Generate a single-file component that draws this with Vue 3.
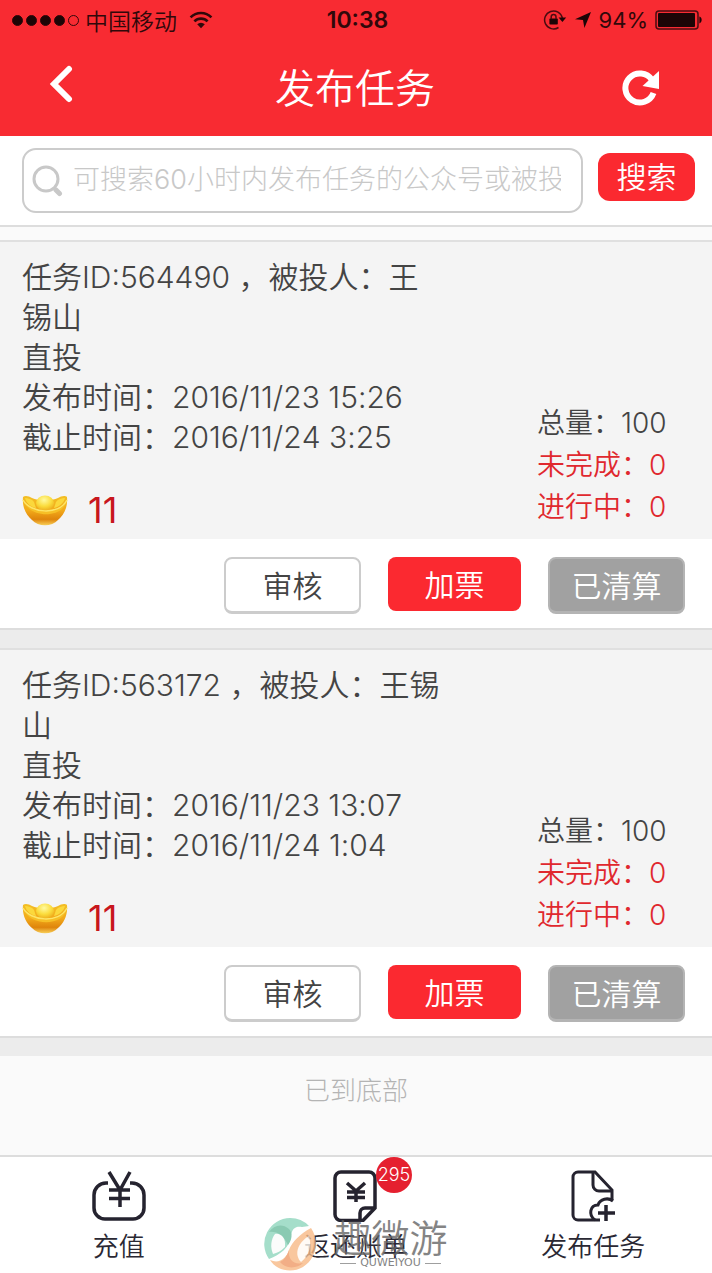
<template>
    <div class="app">
        <header class="top">
            <div class="status-bar">
                <div class="status-left">
                    <span class="signal">
                        <i v-for="n in 5" :key="n" :class="{ empty: n === 5 }"></i>
                    </span>
                    <span class="carrier">中国移动</span>
                    <svg class="wifi" viewBox="0 0 24 18" width="24" height="18">
                        <path d="M1.6 6.4a14.6 14.6 0 0 1 20.8 0" />
                        <path d="M5.4 10.4a9.2 9.2 0 0 1 13.2 0" />
                        <path class="solid" d="M8.2 13.2a5.4 5.4 0 0 1 7.6 0L12 17.2z" />
                    </svg>
                </div>
                <span class="clock">10:38</span>
                <div class="status-right">
                    <svg viewBox="0 0 24 22" width="24" height="22">
                        <path class="line" d="M15.500 18.500A9 9 0 1 1 19.400 9" />
                        <path d="M15.6 8.6h7.6L19.4 13z" />
                        <rect x="6.4" y="9.6" width="8.4" height="6" rx="0.8" />
                        <path class="line" d="M8.2 10V7.8a2.4 2.4 0 0 1 4.8 0V10" />
                    </svg>
                    <svg class="arrow" viewBox="0 0 18 18" width="18" height="18">
                        <path d="M17 1 10.4 17 9 9 1 8.2z" />
                    </svg>
                    <span>94%</span>
                    <svg viewBox="0 0 48 20" width="48" height="20">
                        <rect class="line" x="1" y="1" width="42" height="18" rx="3" />
                        <rect x="3" y="3" width="37" height="14" rx="1" />
                        <path d="M44.4 6.6c3 .8 3 6 0 6.8z" />
                    </svg>
                </div>
            </div>
            <div class="title-bar">
                <button type="button" class="icon-btn" aria-label="返回">
                    <svg viewBox="0 0 30 42" width="30" height="42">
                        <path class="back" d="M20 4 5 19l15 15" />
                    </svg>
                </button>
                <h1>发布任务</h1>
                <button type="button" class="icon-btn" aria-label="刷新">
                    <svg viewBox="0 0 40 40" width="40" height="40">
                        <path class="reload" d="M32.500 27A14.500 14.500 0 1 1 31 14" />
                        <path class="reload-head" d="M38 5v18L21.500 20z" />
                    </svg>
                </button>
            </div>
        </header>

        <form class="search" @submit.prevent>
            <label class="search-box">
                <svg viewBox="0 0 32 32" width="32" height="32">
                    <circle cx="14" cy="14" r="12" />
                    <path class="handle" d="M24 25 27.5 28.5" />
                </svg>
                <input
                    v-model="keyword"
                    type="text"
                    aria-label="搜索任务"
                    placeholder="可搜索60小时内发布任务的公众号或被投人"
                />
            </label>
            <button type="submit" class="search-btn">搜索</button>
        </form>

        <main class="list">
            <section v-for="task in tasks" :key="task.id" class="task">
                <div class="task-body">
                    <div class="task-info">
                        <p>任务ID:{{ task.id }} ，被投人：{{ task.person }}</p>
                        <p>直投</p>
                        <p class="time">发布时间：{{ task.start }}</p>
                        <p class="time">截止时间：{{ task.end }}</p>
                        <div class="price">
                            <svg viewBox="0 0 46 32" width="46" height="32">
                                <defs>
                                    <linearGradient :id="'bowl' + task.id" x1="0" y1="0" x2="0" y2="1">
                                        <stop offset="0" stop-color="#f3bf25" />
                                        <stop offset="0.5" stop-color="#f2a91a" />
                                        <stop offset="0.8" stop-color="#df850c" />
                                        <stop offset="1" stop-color="#f8cf58" />
                                    </linearGradient>
                                    <radialGradient :id="'ball' + task.id" cx="0.45" cy="0.3" r="0.7">
                                        <stop offset="0" stop-color="#fffaa0" />
                                        <stop offset="0.6" stop-color="#fbdc3c" />
                                        <stop offset="1" stop-color="#eeb220" />
                                    </radialGradient>
                                </defs>
                                <path
                                    :fill="`url(#bowl${task.id})`"
                                    d="M1 3c2-2 6-1 9 1 6 3 20 3 26 0 3-2 7-3 9-1 1 10-3 18-9 23-6 7-20 7-26 0C4 21 0 13 1 3z"
                                />
                                <path fill="#fbd83c" d="M3 4c3 0 7 1 9 4l2 6C9 13 4 9 3 4zM43 4c-3 0-7 1-9 4l-2 6c5-1 10-5 11-10z" />
                                <ellipse :fill="`url(#ball${task.id})`" cx="23" cy="9" rx="9" ry="7.500" />
                                <path fill="#f6bf26" d="M1 6c6 12 36 16 44 0-3 19-38 19-44 0z" />
                                <path fill="none" stroke="#fde568" stroke-width="1.500" d="M1 6c7 13 36 16 44 0" />
                            </svg>
                            <span>{{ task.price }}</span>
                        </div>
                    </div>
                    <div class="task-count">
                        <p>总量：{{ task.total }}</p>
                        <p class="red">未完成：{{ task.left }}</p>
                        <p class="red">进行中：{{ task.doing }}</p>
                    </div>
                </div>
                <div class="task-actions">
                    <button type="button" class="btn">审核</button>
                    <button type="button" class="btn btn-red">加票</button>
                    <button type="button" class="btn btn-grey">已清算</button>
                </div>
            </section>
            <p class="list-end">已到底部</p>
        </main>

        <nav class="tabs">
            <a href="#">
                <svg viewBox="0 0 54 52" width="54" height="52">
                    <path d="M16 13h-2A12 12 0 0 0 2 25v13a11 11 0 0 0 11 11h28a11 11 0 0 0 11-11V25a12 12 0 0 0-12-12h-2" />
                    <path d="M17 2 28 20 38 2M28 20v17M17 20h21M17 28.500h21" />
                </svg>
                <span>充值</span>
            </a>
            <a href="#">
                <svg viewBox="0 0 54 52" width="54" height="52">
                    <path d="M32 49.500H12a6 6 0 0 1-6-6V7a6 6 0 0 1 6-6h28a6 6 0 0 1 6 6v30L34 49.500h-3V42a5 5 0 0 1 5-5h9" transform="translate(0 1)" />
                    <path d="m18 13 9 8 9-8M27 21v11M18 22h18M18 27.500h18" />
                </svg>
                <b class="badge">295</b>
                <span>返还账单</span>
            </a>
            <a href="#">
                <svg viewBox="0 0 54 52" width="54" height="52">
                    <path class="thin" d="M34 50H12a5 5 0 0 1-5-5V7a5 5 0 0 1 5-5h17l17 18v10" />
                    <path class="thin" d="M27 3v12a6 6 0 0 0 6 6h13M47 31c-5-4-13-2-15 4-8 0-10 10-3 15" />
                    <path d="M40 35v16M32 43h17" />
                </svg>
                <span>发布任务</span>
            </a>
            <div class="watermark">
                <svg viewBox="0 0 52 54" width="52" height="54">
                    <path fill="#8fd6bd" d="M26 1A26 26 0 0 0 5 42C16 38 26 30 27 19c1-8 5-10 11-9l7-1A26 26 0 0 0 26 1z" />
                    <path fill="#6dbd9f" d="M5 15c5-7 13-9 20-3 4 4 3 11-1 16C19 18 13 14 5 15z" />
                    <path fill="#fbfcfb" d="M11 17c6-1 11 4 10 13-4 4-8 6-12 7-3-7-2-15 2-20z" />
                    <path fill="#f8ba86" d="M47 11c9 13 5 31-8 39C27 57 12 53 6 43c9 4 16-1 19-10 3-8 11-16 22-22z" />
                    <path fill="#fffaf4" d="M45 19c3 9 0 20-8 26-7-7-4-19 8-26z" />
                    <path fill="#ef9a68" d="M25 33c-1 9 4 15 14 13-6 6-18 6-23-1 4-2 7-6 9-12z" />
                </svg>
                <div class="brand">
                    <span class="brand-name">趣微游</span>
                    <span class="brand-en">QUWEIYOU</span>
                </div>
            </div>
        </nav>
    </div>
</template>

<script setup>
import { ref } from "vue";

const keyword = ref("");

const tasks = ref([
    {
        id: "564490",
        person: "王锡山",
        start: "2016/11/23 15:26",
        end: "2016/11/24 3:25",
        price: 11,
        total: 100,
        left: 0,
        doing: 0,
    },
    {
        id: "563172",
        person: "王锡山",
        start: "2016/11/23 13:07",
        end: "2016/11/24 1:04",
        price: 11,
        total: 100,
        left: 0,
        doing: 0,
    },
]);
</script>

<style>
body {
    background: #fafafa;
}
</style>

<style scoped>
.app {
    min-height: 100vh;
    display: flex;
    flex-direction: column;
    font-family: Inter, "Noto Sans CJK SC", sans-serif;
    font-size: 30px;
    font-weight: 350;
    color: #444;
}

p,
h1 {
    margin: 0;
    font-weight: inherit;
}

button,
input {
    font: inherit;
    box-sizing: border-box;
}

button {
    padding: 0 0 3px;
    border: 0;
    cursor: pointer;
}

svg {
    display: block;
    flex: none;
}

.top {
    background: #f82b32;
}

.status-bar {
    display: grid;
    grid-template-columns: 1fr auto 1fr;
    align-items: center;
    height: 40px;
    padding: 0 9px 0 12px;
    font-size: 23px;
    color: #30080a;
}

.status-left,
.status-right {
    display: flex;
    align-items: center;
}

.status-right {
    justify-content: flex-end;
    gap: 7px;
    font-size: 22px;
    font-weight: 400;
}

.status-right svg {
    fill: #1c0506;
}

.status-right .line {
    fill: none;
    stroke: #4a0c10;
    stroke-width: 1.5;
}

.signal {
    display: flex;
    gap: 3px;
    margin-right: 6px;
}

.signal i {
    width: 11px;
    height: 11px;
    box-sizing: border-box;
    border: 1px solid #30080a;
    border-radius: 50%;
    background: #1c0506;
}

.signal i.empty {
    background: none;
}

.carrier {
    font-size: 23px;
}

.wifi {
    margin-left: 12px;
    fill: none;
    stroke: #30080a;
    stroke-width: 2.6;
}

.wifi .solid {
    fill: #30080a;
    stroke: none;
}

.clock {
    font-weight: 600;
}

.title-bar {
    display: flex;
    align-items: center;
    justify-content: space-between;
    height: 96px;
    box-sizing: border-box;
    padding: 0 51px 4px 49px;
    color: #fff;
}

.title-bar h1 {
    font-size: 40px;
}

.icon-btn {
    width: 40px;
    padding: 0;
    background: none;
}

.icon-btn path {
    fill: none;
    stroke: #fff;
    stroke-width: 6;
}

.icon-btn .back {
    stroke-linecap: round;
}

.icon-btn .reload-head {
    fill: #fff;
    stroke: none;
}

.search {
    display: flex;
    align-items: center;
    gap: 15px;
    padding: 12px 17px 12px 22px;
    background: #fff;
    border-bottom: 2px solid #ddd;
}

.search-box {
    flex: 1;
    min-width: 0;
    display: flex;
    align-items: center;
    gap: 9px;
    height: 65px;
    box-sizing: border-box;
    padding: 0 20px 0 8px;
    border: 2px solid #ccc;
    border-radius: 14px;
}

.search-box svg {
    fill: none;
    stroke: #c8c8c8;
    stroke-width: 3;
}

.search-box .handle {
    stroke-width: 5;
    stroke-linecap: round;
}

.search-box input {
    flex: 1;
    min-width: 0;
    padding: 0 0 3px;
    border: 0;
    outline: 0;
    background: none;
    font-size: 27px;
    font-weight: 300;
    color: #444;
}

.search-box input::placeholder {
    color: #c8c8c8;
}

.search-btn {
    width: 97px;
    height: 48px;
    margin-bottom: 8px;
    border-radius: 12px;
    background: #fb2930;
    color: #fff;
}

.list {
    flex: 1;
    padding-top: 13px;
    background: #fafafa;
}

.task {
    border-top: 2px solid #e0e0e0;
    border-bottom: 18px solid #ececec;
    background: #fff;
}

.task-body {
    display: flex;
    justify-content: space-between;
    align-items: flex-end;
    padding: 15px 45px 11px 22px;
    background: #f4f4f4;
}

.task-info {
    width: 424px;
    line-height: 40px;
}

.time {
    font-kerning: none;
    font-feature-settings: "calt" 0;
}

.price {
    display: flex;
    align-items: center;
    gap: 20px;
    margin-top: 35px;
    height: 36px;
    font-size: 36px;
    font-weight: 400;
    color: #c8161d;
}

.task-count {
    width: 130px;
    font-size: 28px;
    line-height: 42px;
    white-space: nowrap;
}

.red {
    color: #e0282e;
}

.task-actions {
    display: flex;
    justify-content: flex-end;
    gap: 27px;
    padding: 18px 27px 14px;
    border-bottom: 2px solid #ddd;
}

.btn {
    width: 137px;
    height: 57px;
    border: 2px solid #ccc;
    border-bottom-width: 3px;
    border-radius: 8px;
    background: #fff;
    color: #444;
}

.btn-red {
    width: 133px;
    height: 54px;
    border: 0;
    background: #fb2930;
    color: #fff;
}

.btn-grey {
    border-color: #b4b4b4;
    background: #a1a1a1;
    color: #fff;
}

.list-end {
    padding: 15px 0 13px;
    font-size: 26px;
    font-weight: 300;
    line-height: 40px;
    text-align: center;
    color: #b4b4b4;
}

.tabs {
    position: relative;
    display: grid;
    grid-template-columns: repeat(3, 1fr);
    border-top: 2px solid #ddd;
    background: #fff;
}

.tabs a {
    position: relative;
    display: flex;
    flex-direction: column;
    align-items: center;
    padding: 13px 0 6px;
    font-size: 26px;
    line-height: 40px;
    color: #2a2833;
    text-decoration: none;
}

.tabs a svg {
    margin-bottom: 5px;
    fill: none;
    stroke: #25232f;
    stroke-width: 3.5;
}

.tabs a .thin {
    stroke-width: 3;
}

.badge {
    position: absolute;
    top: 0;
    left: 50%;
    width: 36px;
    height: 36px;
    margin-left: 20px;
    border-radius: 50%;
    background: #e5202f;
    color: #fff;
    font-size: 18px;
    font-weight: 300;
    line-height: 36px;
    text-align: center;
}

.watermark {
    position: absolute;
    left: 0;
    right: 0;
    bottom: 2px;
    display: flex;
    justify-content: center;
    align-items: center;
    gap: 17px;
    opacity: 0.8;
    pointer-events: none;
}

.brand {
    display: flex;
    flex-direction: column;
    align-items: center;
    color: #666;
}

.brand-name {
    font-size: 38px;
    line-height: 38px;
}

.brand-en {
    display: flex;
    align-items: center;
    gap: 4px;
    font-family: "DejaVu Sans", sans-serif;
    font-size: 11px;
    font-weight: 400;
    line-height: 12px;
}

.brand-en::before,
.brand-en::after {
    content: "";
    width: 16px;
    height: 1px;
    background: #888;
}
</style>
